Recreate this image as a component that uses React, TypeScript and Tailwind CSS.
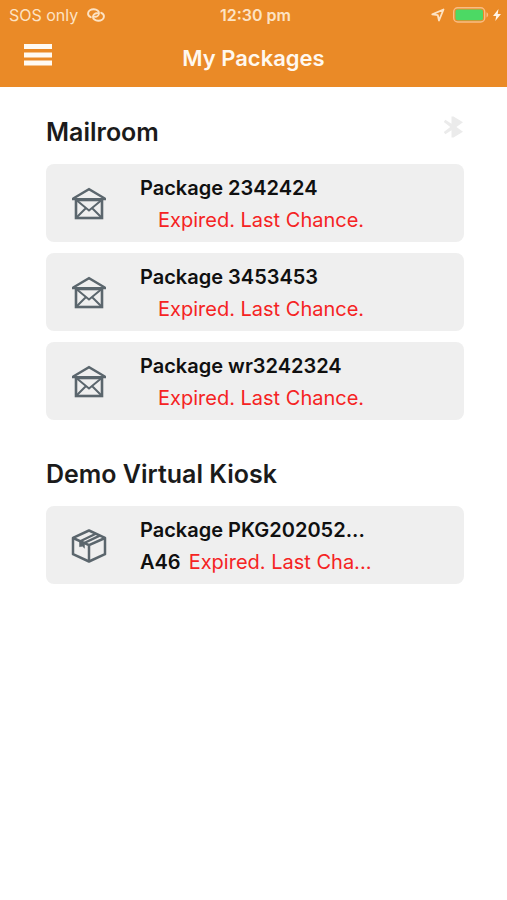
type Package = {
  name: string;
  locker?: string;
  status: string;
};

type Site = {
  title: string;
  kind: "mailroom" | "kiosk";
  bluetooth?: boolean;
  packages: Package[];
};

const sites: Site[] = [
  {
    title: "Mailroom",
    kind: "mailroom",
    bluetooth: true,
    packages: [
      { name: "Package 2342424", status: "Expired. Last Chance." },
      { name: "Package 3453453", status: "Expired. Last Chance." },
      { name: "Package wr3242324", status: "Expired. Last Chance." },
    ],
  },
  {
    title: "Demo Virtual Kiosk",
    kind: "kiosk",
    packages: [
      { name: "Package PKG202052...", locker: "A46", status: "Expired. Last Cha..." },
    ],
  },
];

const MailroomIcon = () => (
  <svg className="h-9 w-9" viewBox="0 0 36 36" fill="none" stroke="#5b666d" aria-hidden="true">
    <path d="M1.800 12.800 18 3.200l16.200 9.600" strokeWidth="2.300" />
    <path d="M1 13.200H35" strokeWidth="2.200" />
    <rect x="5" y="14" width="26" height="18" strokeWidth="2.600" />
    <path d="M5 13.800 18 24.500 31 13.800M5.500 31.500l9-9M30.500 31.500l-9-9" strokeWidth="2" />
  </svg>
);

const BoxIcon = () => (
  <svg
    className="h-9 w-9"
    viewBox="0 0 36 36"
    fill="none"
    stroke="#5b666d"
    strokeWidth="2.500"
    strokeLinejoin="round"
    aria-hidden="true"
  >
    <path d="M18 2.500 34 9.800v16.400L18 33.500 2 26.200V9.800z" />
    <path d="M2 10l16 7.200L34 10M18 17v16.500" />
    <path d="M9.200 13.200 24.800 5.800M13.200 15 28.800 7.600" strokeWidth="2.300" />
    <path d="M8.500 12.800l5 2.200v5.200l-2-1.900-3 .400z" fill="#5b666d" strokeWidth="0.500" />
  </svg>
);

const BluetoothIcon = () => (
  <svg className="h-[22px] w-[21px]" viewBox="2 1 21 22" fill="#ebebeb" aria-label="Bluetooth off">
    <path d="M10.500 1.500h2L22 7.300l-6.600 4.700 6.600 4.700-9.500 5.800h-2v-7.300l-6.200 4-1.500-2.200L9.300 12 2.800 7l1.500-2.200 6.200 4z" />
  </svg>
);

const StatusBar = () => (
  <div className="grid h-[30px] grid-cols-3 items-center pl-1 text-base leading-5 text-[#fde3c4]">
    <div className="flex items-center gap-2 pl-[5px]">
      <span>SOS only</span>
      <svg
        className="h-4 w-5"
        viewBox="0 0 20 16"
        fill="none"
        stroke="currentColor"
        strokeWidth="1.900"
        strokeLinecap="round"
        aria-hidden="true"
      >
        <path d="M4.800 10.200C2.900 9.500 1.900 8 2.100 6.200 2.400 3.800 4.900 2.200 7.900 2.300c3 .1 5.200 1.700 5.100 4-.1 2-2 3.600-4.200 3.500" />
        <path d="M15.200 5.800c1.900.7 2.900 2.200 2.700 4-.3 2.400-2.800 4-5.800 3.900-3-.1-5.200-1.700-5.100-4 .1-2 2-3.600 4.200-3.500" />
      </svg>
    </div>
    <div className="text-center font-semibold">12:30 pm</div>
    <div className="flex items-center justify-end pr-[6px]">
      <svg
        className="mr-2 h-[14px] w-[14px]"
        viewBox="0 0 14 14"
        fill="none"
        stroke="currentColor"
        strokeWidth="1.800"
        strokeLinejoin="round"
        aria-hidden="true"
      >
        <path d="M12.500 1.500 8 12.500 6.800 7.200 1.300 6.300z" />
      </svg>
      <svg className="h-4 w-9" viewBox="0 0 36 16" aria-hidden="true">
        <rect x="0.700" y="0.700" width="31" height="14.300" rx="4" fill="none" stroke="#f8bd84" strokeWidth="1.400" />
        <rect x="2.500" y="2.500" width="27.500" height="10.800" rx="2" fill="#4cd964" />
        <path d="M33.500 5.300c2.200.8 2.200 4.300 0 5.200z" fill="#f8bd84" />
      </svg>
      <svg className="ml-1 h-3 w-2" viewBox="0 0 8 12" fill="#fff4e8" aria-hidden="true">
        <path d="M5.500 0 0 6.900h3.200L2.300 12 8 5H4.700z" />
      </svg>
    </div>
  </div>
);

const Header = () => (
  <header className="bg-[#ea8a27]">
    <StatusBar />
    <div className="grid h-[57px] grid-cols-[80px_1fr_80px] items-start">
      <button type="button" aria-label="Menu" className="ml-6 mt-3 w-7">
        <svg className="h-[26px] w-7" viewBox="0 0 28 26" fill="#fffaf3" aria-hidden="true">
          <rect y="2" width="28" height="5" />
          <rect y="10.500" width="28" height="5" />
          <rect y="18.500" width="28" height="5" />
        </svg>
      </button>
      <h1 className="mt-3 text-center text-[22px] leading-8 font-semibold text-[#fff8ef]">
        My Packages
      </h1>
    </div>
  </header>
);

const PackageCard = ({ item, kind }: { item: Package; kind: Site["kind"] }) => (
  <button
    type="button"
    className="flex w-full items-center rounded-lg bg-[#efefef] pt-2 pb-[6px] pl-[25px] text-left text-xl leading-8"
  >
    {kind === "mailroom" ? <MailroomIcon /> : <BoxIcon />}
    <span className="ml-[33px] min-w-0 flex-1">
      <span className="block font-semibold text-[#101010]">{item.name}</span>
      <span className="block">
        {item.locker ? (
          <span className="mr-2 font-semibold text-[#101010]">{item.locker}</span>
        ) : (
          <span className="inline-block w-[18px]" />
        )}
        <span className="text-[#f52323]">{item.status}</span>
      </span>
    </span>
  </button>
);

const App = () => {
  return (
    <div className="min-h-screen bg-white font-[Inter,sans-serif]">
      <Header />
      <main className="flex flex-col gap-[38px] pt-[29px] pr-[43px] pb-8 pl-[46px]">
        {sites.map((site) => (
          <section key={site.title}>
            <div className="mb-4 flex h-8 justify-between">
              <h2 className="text-[25px] leading-8 font-semibold text-[#1b1b1b]">{site.title}</h2>
              {site.bluetooth && <BluetoothIcon />}
            </div>
            <ul className="flex flex-col gap-[11px]">
              {site.packages.map((item) => (
                <li key={item.name}>
                  <PackageCard item={item} kind={site.kind} />
                </li>
              ))}
            </ul>
          </section>
        ))}
      </main>
    </div>
  );
};

export default App;
